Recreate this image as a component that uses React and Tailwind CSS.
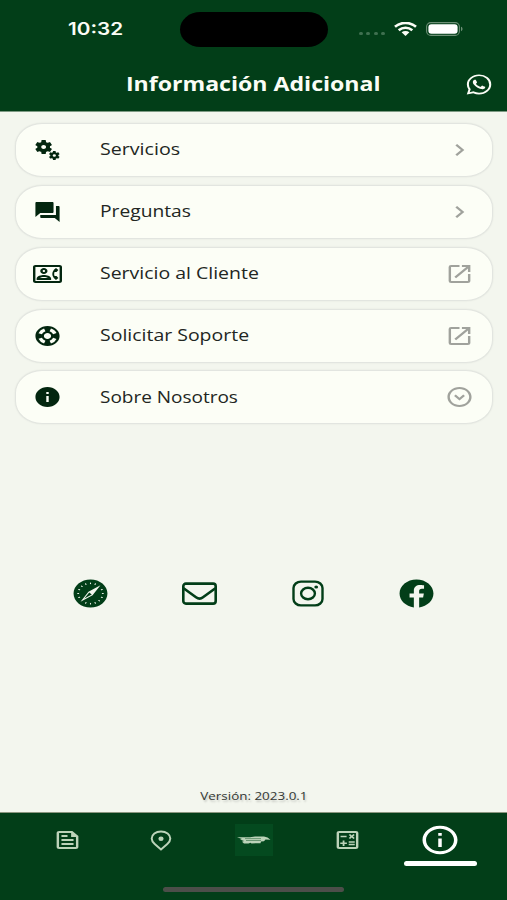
import React from 'react';
import {
    MdMiscellaneousServices,
    MdForum,
    MdOutlineContactPhone,
    MdSupport,
    MdInfo,
    MdChevronRight,
    MdOpenInNew,
    MdOutlineExpandCircleDown,
    MdOutlineFeed,
    MdOutlineCalculate,
    MdOutlineInfo,
} from 'react-icons/md';
import { FaSafari, FaFacebook } from 'react-icons/fa';
import { IoLogoWhatsapp } from 'react-icons/io5';

// Icons are drawn a little wider than tall across the whole app
const wide = { preserveAspectRatio: 'none' };

function EnvelopeIcon({ className }) {
    return (
        <svg className={className} viewBox="0 0 35 29" fill="none" stroke="currentColor" strokeWidth="2.6">
            <rect x="1.3" y="4.6" width="32.4" height="20" rx="2.6" />
            <path d="M1.6 9.2 14 18.300c2.600 1.900 4.600 1.900 7 0L33.400 9.200" />
        </svg>
    );
}

function InstagramIcon({ className }) {
    return (
        <svg className={className} viewBox="0 0 32 27" fill="none" stroke="currentColor" strokeWidth="2.4">
            <rect x="1.5" y="1.6" width="29" height="23.8" rx="7.5" ry="6.5" />
            <ellipse cx="16" cy="13.5" rx="6.9" ry="5.7" />
            <ellipse cx="24.2" cy="6.9" rx="1.9" ry="1.5" fill="currentColor" stroke="none" />
        </svg>
    );
}

const options = [
    { label: 'Servicios', icon: MdMiscellaneousServices, action: MdChevronRight, scale: 'scale-x-[1.19]' },
    { label: 'Preguntas', icon: MdForum, action: MdChevronRight, scale: 'scale-x-[1.165]' },
    { label: 'Servicio al Cliente', icon: MdOutlineContactPhone, action: MdOpenInNew, scale: 'scale-x-[1.18]' },
    { label: 'Solicitar Soporte', icon: MdSupport, action: MdOpenInNew, scale: 'scale-x-[1.18]' },
    { label: 'Sobre Nosotros', icon: MdInfo, action: MdOutlineExpandCircleDown, scale: 'scale-x-[1.15]' },
];

const socials = [
    { name: 'Sitio web', icon: FaSafari, size: 'w-[35px] h-[29px]' },
    { name: 'Correo', icon: EnvelopeIcon, size: 'w-[35px] h-[29px]' },
    { name: 'Instagram', icon: InstagramIcon, size: 'w-[32px] h-[27px]' },
    { name: 'Facebook', icon: FaFacebook, size: 'w-[35px] h-[29px]' },
];

function StatusBar() {
    return (
        <div className="h-[58px] pt-3 pl-[68px] pr-[44px] flex items-start">
            <div className="w-[112px] h-[35px] flex items-center">
                <span className="origin-left scale-x-[1.22] text-[17px] font-semibold font-[Inter,sans-serif]">10:32</span>
            </div>
            <div className="w-[148px] h-[35px] rounded-[21px/18px] bg-black" />
            <div className="ml-auto h-[35px] flex items-center">
                <div className="flex gap-[3.5px] mt-2 mr-[9px]">
                    {[0, 1, 2, 3].map((dot) => (
                        <span key={dot} className="w-[4px] h-[3.5px] rounded-full bg-[#3f7050]" />
                    ))}
                </div>
                <svg className="w-[23px] h-[14px] mr-[9px] -mt-[2px]" viewBox="0 0 23 14" fill="none" stroke="currentColor" strokeWidth="2.7">
                    <path d="M1 4.8C7-.3 16-.3 22 4.8" />
                    <path d="M4.7 8.2c4-3.3 9.6-3.3 13.6 0" />
                    <path d="M7.6 10.3c2.2-1.7 5.6-1.7 7.8 0L11.5 14z" fill="currentColor" stroke="none" />
                </svg>
                <svg className="w-[37px] h-[14px] -mt-[2px]" viewBox="0 0 37 14">
                    <rect x=".6" y=".6" width="32.8" height="12.8" rx="4.2" fill="none" stroke="#6d8f76" strokeWidth="1.1" />
                    <rect x="2.4" y="2.2" width="29.2" height="9.6" rx="3" fill="#fff" />
                    <path d="M35 4.8c2 .6 2 3.8 0 4.4z" fill="#6d8f76" />
                </svg>
            </div>
        </div>
    );
}

function Header() {
    return (
        <header className="h-[112px] shrink-0 bg-[#023e18] text-[#fbfdf6] border-b border-[#7d9a83]">
            <StatusBar />
            <div className="h-[52px] grid grid-cols-[1fr_auto_1fr] items-center px-[14px]">
                <span />
                <h1 className="scale-x-[1.155] text-[20px] leading-none font-bold whitespace-nowrap">Información Adicional</h1>
                <IoLogoWhatsapp {...wide} className="w-[28px] h-[23px] justify-self-end" />
            </div>
        </header>
    );
}

function OptionRow({ label, icon: Icon, action: Action, scale }) {
    return (
        <button className="w-full h-[54px] pl-[17px] pr-[18px] flex items-center bg-[#fcfef6] border border-[#e2e5e0] rounded-[27px/23px] shadow-[0_0_2px_rgba(0,30,10,0.08)] text-left">
            <Icon {...wide} className="w-[29px] h-[24px] text-[#03260f]" />
            <span className={`ml-[38px] flex-1 origin-left pb-[1px] text-[16.5px] text-[#222622] whitespace-nowrap ${scale}`}>{label}</span>
            <Action {...wide} className="w-[29px] h-[24px] text-[#a0a29c]" />
        </button>
    );
}

function BottomNav() {
    return (
        <nav className="h-[88px] shrink-0 bg-[#023e18] border-t border-[#8b967f] flex flex-col items-center text-[#bcd3b9]">
            <div className="w-full pl-[21px] pr-5 grid grid-cols-5 justify-items-center">
                <div className="h-[54px] flex items-center">
                    <MdOutlineFeed {...wide} className="w-[29px] h-[24px]" />
                </div>
                <div className="h-[54px] flex items-center">
                    <svg className="w-[22px] h-[21px]" viewBox="0 0 22 21" fill="none" stroke="currentColor" strokeWidth="2">
                        <path d="M11 19.4 4.7 14C2.6 12.2 1.7 10.5 1.7 8.6 1.7 4.6 5.7 1.5 11 1.5s9.3 3.1 9.3 7.1c0 1.9-.9 3.6-3 5.4z" />
                        <ellipse cx="11" cy="8.7" rx="2.6" ry="2.2" fill="currentColor" stroke="none" />
                    </svg>
                </div>
                <div className="h-[54px] flex items-center">
                    <div className="w-[38px] h-8 flex items-center justify-center bg-[#044a1f]">
                        <svg className="w-[34px] h-[8px]" viewBox="0 0 34 8">
                            <path d="M0 1.2h13L18 .4h9l3.500 1 3 2.400-5-.2-1.500 1.600-3 .2-.5 1.800-9 .2-1-.6-2 .8H7l-2-1.800 2-.8-4-1.400 2-.6z" fill="currentColor" />
                            <path d="M8 2.600h16M9 4.500h15" stroke="#2f6b41" strokeWidth=".6" />
                        </svg>
                    </div>
                </div>
                <div className="h-[54px] flex items-center">
                    <MdOutlineCalculate {...wide} className="w-[29px] h-[24px]" />
                </div>
                <div className="h-[54px] flex flex-col items-center pt-[10px] text-white">
                    <MdOutlineInfo {...wide} className="w-[42px] h-[34px] shrink-0" />
                    <span className="mt-1 w-[73px] h-[5px] shrink-0 rounded-full bg-white" />
                </div>
            </div>
            <div className="mt-5 w-[181px] h-[5px] rounded-full bg-[#4c4e49]" />
        </nav>
    );
}

export default function App() {
    return (
        <div className="w-full h-[900px] flex flex-col bg-[#f3f6ee] font-['Open_Sans',sans-serif] overflow-hidden">
            <Header />

            <main className="flex-1 min-h-0 flex flex-col pt-[11.3px]">
                <div className="flex flex-col gap-[7.8px] pl-[15px] pr-[14px]">
                    {options.map((option) => (
                        <OptionRow key={option.label} {...option} />
                    ))}
                </div>

                {/* Social links */}
                <div className="mt-[154.5px] px-[36px] grid grid-cols-4 justify-items-center items-center text-[#023e18]">
                    {socials.map(({ name, icon: Icon, size }) => (
                        <a key={name} href="#" aria-label={name}>
                            <Icon {...wide} className={size} />
                        </a>
                    ))}
                </div>

                <p className="mt-auto mb-[9px] self-center scale-x-[1.22] text-[11px] leading-[15px] text-[#333733] [text-shadow:1px_2px_2px_rgba(0,0,0,0.2)]">
                    Versión: 2023.0.1
                </p>
            </main>

            <BottomNav />
        </div>
    );
}
